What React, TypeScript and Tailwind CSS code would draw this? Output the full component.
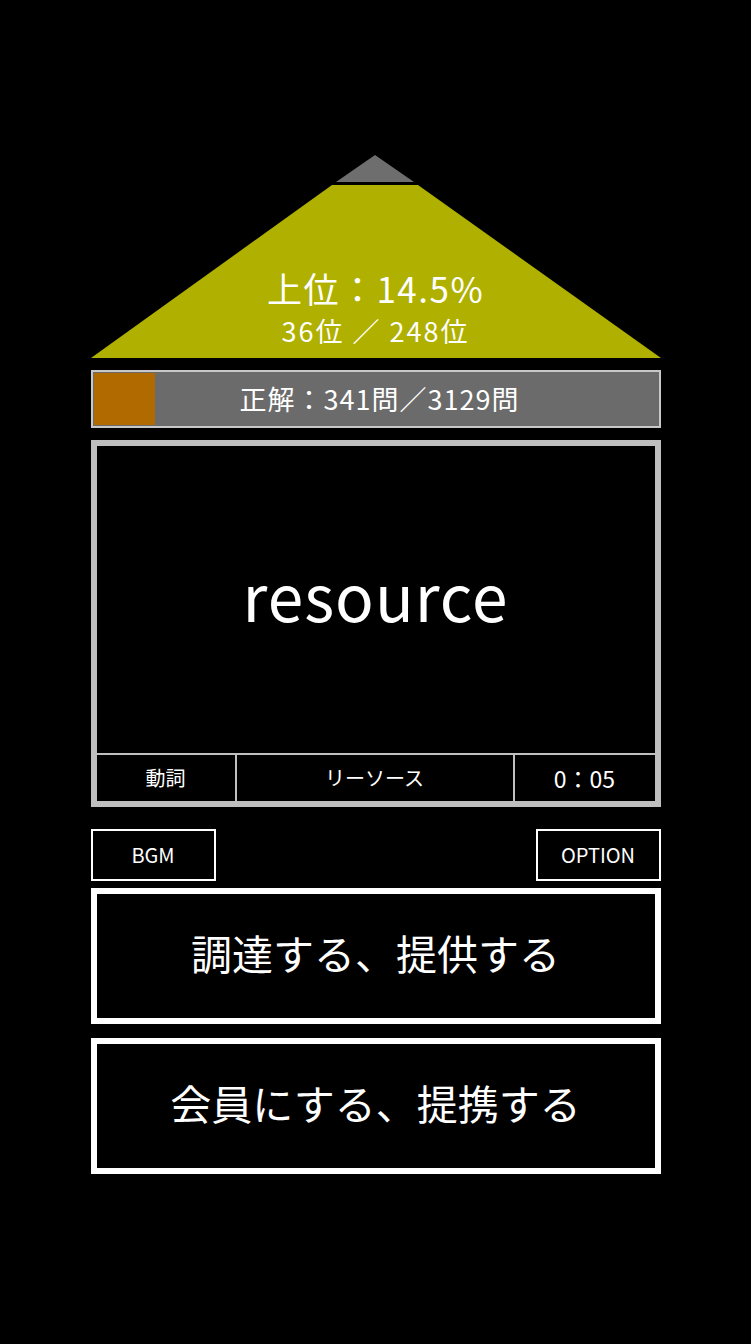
import React from 'react';

const font = { fontFamily: '"Noto Sans CJK JP", "Noto Sans", sans-serif' };

const Pyramid: React.FC = () => (
  <div className="relative h-[203px] w-full">
    <svg className="absolute inset-0" width="570" height="203" viewBox="0 0 570 203">
      <polygon points="284,0 245,27 323,27" fill="#6e6e6e" />
      <polygon points="241,30 327,30 570,203 0,203" fill="#b0b000" />
    </svg>
    <div className="relative flex h-full flex-col items-center justify-end pb-[7px] text-white">
      <div className="text-[35px] leading-[46px] tracking-[1.5px]">上位：14.5%</div>
      <div className="text-[27px] leading-[40px] tracking-[2px]">36位 ／ 248位</div>
    </div>
  </div>
);

const App: React.FC = () => {
  return (
    <div className="min-h-[1344px] w-full bg-black" style={font}>
      <div className="mx-auto flex w-[570px] flex-col pt-[155px]">
        <Pyramid />

        <div className="mt-[12px] flex h-[58px] border-2 border-[#c8c8c8] bg-[#6b6b6b]">
          <div className="m-[1px] w-[61px] bg-[#b06a00]" />
          <div className="flex flex-1 items-center justify-center pr-[55px] text-[27px] tracking-[1px] text-white">
            正解：341問／3129問
          </div>
        </div>

        <div className="mt-[12px] flex h-[367px] flex-col border-[6px] border-[#bfbfbf]">
          <div className="flex flex-1 items-center justify-center pb-[12px] text-[64px] tracking-[1px] text-white">
            resource
          </div>
          <div className="grid h-[48px] grid-cols-[140px_1fr_140px] border-t-2 border-[#bfbfbf] text-[20px] text-white">
            <div className="flex items-center justify-center border-r-2 border-[#bfbfbf]">動詞</div>
            <div className="flex items-center justify-center border-r-2 border-[#bfbfbf]">リーソース</div>
            <div className="flex items-center justify-center text-[23px]">0：05</div>
          </div>
        </div>

        <div className="mt-[22px] flex justify-between">
          <button className="flex h-[52px] w-[125px] items-center justify-center border-2 border-white text-[20px] text-white">
            BGM
          </button>
          <button className="flex h-[52px] w-[125px] items-center justify-center border-2 border-white text-[20px] text-white">
            OPTION
          </button>
        </div>

        <button className="mt-[7px] flex h-[136px] items-center justify-center border-[6px] border-white pb-[6px] text-[41px] text-white">
          調達する、提供する
        </button>
        <button className="mt-[14px] flex h-[136px] items-center justify-center border-[6px] border-white pb-[6px] text-[41px] text-white">
          会員にする、提携する
        </button>
      </div>
    </div>
  );
};

export default App;
